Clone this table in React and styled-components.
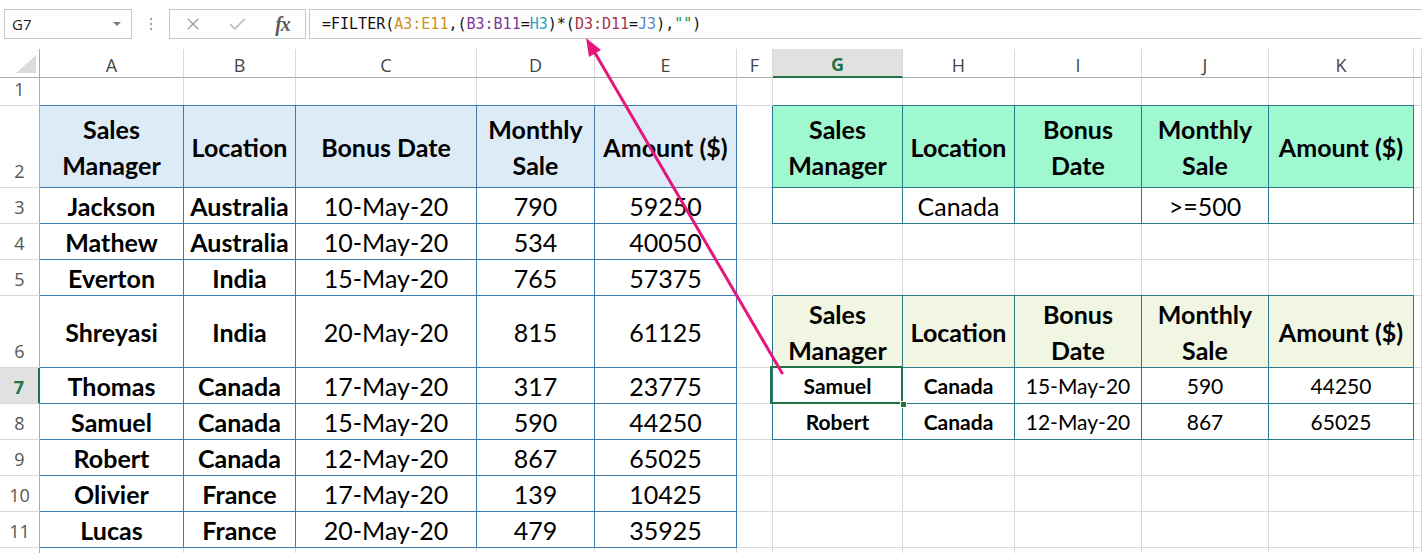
import React from 'react';
import styled, { createGlobalStyle } from 'styled-components';
import { X, Check } from 'lucide-react';

const COLS = ['A', 'B', 'C', 'D', 'E', 'F', 'G', 'H', 'I', 'J', 'K', 'L'];
const ROW_COUNT = 12;
const LAST_LABELLED_ROW = 11;
const ACTIVE_COL = 7; // G
const ACTIVE_ROW = 7;

const GRID = '#d9d9d9';

const headLabels = ['Sales\nManager', 'Location', 'Bonus Date', 'Monthly\nSale', 'Amount ($)'];
const criteriaLabels = ['Sales\nManager', 'Location', 'Bonus\nDate', 'Monthly\nSale', 'Amount ($)'];

const source = [
  ['Jackson', 'Australia', '10-May-20', '790', '59250'],
  ['Mathew', 'Australia', '10-May-20', '534', '40050'],
  ['Everton', 'India', '15-May-20', '765', '57375'],
  ['Shreyasi', 'India', '20-May-20', '815', '61125'],
  ['Thomas', 'Canada', '17-May-20', '317', '23775'],
  ['Samuel', 'Canada', '15-May-20', '590', '44250'],
  ['Robert', 'Canada', '12-May-20', '867', '65025'],
  ['Olivier', 'France', '17-May-20', '139', '10425'],
  ['Lucas', 'France', '20-May-20', '479', '35925'],
];

const results = [
  ['Samuel', 'Canada', '15-May-20', '590', '44250'],
  ['Robert', 'Canada', '12-May-20', '867', '65025'],
];

const tables = [
  { col: 1, row: 2, line: '#3d7ab0', headBg: '#ddebf7', labels: headLabels, body: source, size: 25, boldCols: 2, edgeLeft: false },
  { col: 7, row: 2, line: '#2d7a8f', headBg: '#a0f8d0', labels: criteriaLabels, body: [['', 'Canada', '', '>=500', '']], size: 25, boldCols: 0, edgeLeft: true },
  { col: 7, row: 6, line: '#2d7a8f', headBg: '#f1f6e2', labels: criteriaLabels, body: results, size: 21, boldCols: 2, edgeLeft: true },
];

const findCell = (r, c) => {
  for (const t of tables) {
    const lastRow = t.row + t.body.length;
    if (c < t.col || c > t.col + 4 || r < t.row || r > lastRow) continue;
    const i = c - t.col;
    const shadows = [];
    if (r === t.row) shadows.push(`0 -1px 0 ${t.line}`);
    if (i === 0 && t.edgeLeft) shadows.push(`-1px 0 0 ${t.line}`);
    const shadow = shadows.length ? shadows.join(', ') : 'none';
    if (r === t.row) {
      return { text: t.labels[i], bg: t.headBg, line: t.line, bold: true, size: 25, shadow };
    }
    return { text: t.body[r - t.row - 1][i], line: t.line, bold: i < t.boldCols, size: t.size, shadow };
  }
  return { text: '' };
};

const GlobalStyle = createGlobalStyle`
  html, body { margin: 0; padding: 0; background: #fff; }
  body { width: 1422px; height: 553px; overflow: hidden; }
`;

const Page = styled.div`
  position: relative;
  width: 1422px;
  height: 553px;
  overflow: hidden;
  font-family: Lato, "Open Sans", sans-serif;
`;

const FormulaBar = styled.div`
  display: flex;
  align-items: flex-start;
  height: 49px;
  box-sizing: border-box;
  padding: 9px 0 0 4px;
`;

const NameBox = styled.div`
  width: 128px;
  height: 30px;
  box-sizing: border-box;
  border: 1px solid #c6c6c6;
  display: flex;
  align-items: center;
  justify-content: space-between;
  padding: 0 10px 0 7px;
  font-family: "Open Sans", sans-serif;
  font-size: 15px;
  color: #222;
`;

const Caret = styled.span`
  width: 0;
  height: 0;
  border-left: 4px solid transparent;
  border-right: 4px solid transparent;
  border-top: 4px solid #7a7a7a;
`;

const Grip = styled.div`
  width: 37px;
  height: 30px;
  display: flex;
  flex-direction: column;
  align-items: center;
  justify-content: center;
  gap: 3px;

  span {
    width: 2px;
    height: 2px;
    background: #a3a3a3;
  }
`;

const FxBox = styled.div`
  width: 137px;
  height: 30px;
  box-sizing: border-box;
  border: 1px solid #c6c6c6;
  display: grid;
  grid-template-columns: repeat(3, 1fr);
  align-items: center;
  justify-items: center;
`;

const Fx = styled.span`
  font-family: "Liberation Serif", serif;
  font-style: italic;
  font-weight: 700;
  font-size: 20px;
  color: #5a5a5a;
  letter-spacing: -1px;
`;

const FormulaInput = styled.div`
  flex: 1;
  height: 30px;
  margin-left: 3px;
  box-sizing: border-box;
  border: 1px solid #c6c6c6;
  border-right: none;
  display: flex;
  align-items: center;
  padding-left: 12px;
  font-family: "DejaVu Sans Mono", "Liberation Mono", monospace;
  font-size: 15px;
  color: #111;
  white-space: pre;
`;

const Ref = styled.span`
  color: ${p => p.$c};
`;

const Sheet = styled.div`
  display: grid;
  grid-template-columns: 40px 144px 112px 181px 118px 142px 36px 130px 112px 127px 127px 145px 1fr;
  grid-template-rows: 29px 28px 82px 36px 36px 36px 72px 36px 36px 36px 36px 36px 36px;
`;

const Corner = styled.div`
  box-sizing: border-box;
  border-right: 1px solid #ababab;
  border-bottom: 1px solid #ababab;
  display: flex;
  align-items: flex-end;
  justify-content: flex-end;
  padding: 0 3px 4px 0;

  &::after {
    content: '';
    width: 0;
    height: 0;
    border-left: 20px solid transparent;
    border-bottom: 18px solid #dcdcdc;
  }
`;

const ColHead = styled.div`
  box-sizing: border-box;
  border-right: 1px solid ${GRID};
  border-bottom: ${p => (p.$active ? '2px solid #217346' : '1px solid #ababab')};
  background: ${p => (p.$active ? '#e1e1e1' : '#fff')};
  color: ${p => (p.$active ? '#217346' : '#444')};
  font-weight: ${p => (p.$active ? 700 : 400)};
  display: flex;
  align-items: center;
  justify-content: center;
  padding-top: 3px;
  font-family: "Open Sans", sans-serif;
  font-size: 18px;
`;

const RowHead = styled.div`
  box-sizing: border-box;
  border-right: ${p => (p.$active ? '2px solid #217346' : '1px solid #ababab')};
  border-bottom: 1px solid ${GRID};
  background: ${p => (p.$active ? '#e1e1e1' : '#fff')};
  color: ${p => (p.$active ? '#217346' : '#555')};
  font-weight: ${p => (p.$active ? 700 : 400)};
  display: flex;
  align-items: flex-end;
  justify-content: center;
  padding-bottom: 4px;
  font-family: "Open Sans", sans-serif;
  font-size: 18px;
  line-height: 24px;
`;

const Cell = styled.div`
  position: relative;
  box-sizing: border-box;
  border-right: 1px solid ${p => p.$line || GRID};
  border-bottom: 1px solid ${p => p.$line || GRID};
  background: ${p => p.$bg || '#fff'};
  box-shadow: ${p => p.$shadow || 'none'};
  display: flex;
  align-items: center;
  justify-content: center;
  text-align: center;
  white-space: pre;
  line-height: 36px;
  font-size: ${p => p.$size || 25}px;
  font-weight: ${p => (p.$bold ? 700 : 400)};
  color: #000;
`;

const SelectedCell = styled(Cell)`
  z-index: 2;

  &::before {
    content: '';
    position: absolute;
    left: -3px;
    top: -2px;
    right: -1px;
    bottom: -1px;
    border: 2px solid #217346;
  }

  &::after {
    content: '';
    position: absolute;
    right: -5px;
    bottom: -5px;
    width: 5px;
    height: 5px;
    background: #217346;
    border: 1px solid #fff;
  }
`;

const Arrow = styled.svg`
  position: absolute;
  left: 0;
  top: 0;
  pointer-events: none;
  z-index: 5;
`;

const App = () => {
  const rows = Array.from({ length: ROW_COUNT }, (_, i) => i + 1);

  return (
    <Page>
      <GlobalStyle />
      <FormulaBar>
        <NameBox>
          G7
          <Caret />
        </NameBox>
        <Grip>
          <span />
          <span />
          <span />
        </Grip>
        <FxBox>
          <X size={20} strokeWidth={1.4} color="#9c9c9c" />
          <Check size={21} strokeWidth={2.2} color="#c4c4c4" />
          <Fx>fx</Fx>
        </FxBox>
        <FormulaInput>
          =FILTER(<Ref $c="#d0901c">A3:E11</Ref>,(<Ref $c="#80379a">B3:B11</Ref>=<Ref $c="#2aa0b6">H3</Ref>)*(<Ref $c="#a3334f">D3:D11</Ref>=<Ref $c="#5a86c8">J3</Ref>),<Ref $c="#2b8a43">""</Ref>)
        </FormulaInput>
      </FormulaBar>

      <Sheet>
        <Corner />
        {COLS.map((c, i) => (
          <ColHead key={c} $active={i + 1 === ACTIVE_COL}>
            {i < 11 ? c : ''}
          </ColHead>
        ))}
        {rows.map(r => (
          <React.Fragment key={r}>
            <RowHead $active={r === ACTIVE_ROW}>{r <= LAST_LABELLED_ROW ? r : ''}</RowHead>
            {COLS.map((c, i) => {
              const cell = findCell(r, i + 1);
              const Comp = r === ACTIVE_ROW && i + 1 === ACTIVE_COL ? SelectedCell : Cell;
              return (
                <Comp
                  key={c}
                  $bg={cell.bg}
                  $line={cell.line}
                  $bold={cell.bold}
                  $size={cell.size}
                  $shadow={cell.shadow}
                >
                  {cell.text}
                </Comp>
              );
            })}
          </React.Fragment>
        ))}
      </Sheet>

      <Arrow width="1422" height="553" viewBox="0 0 1422 553">
        <line x1="782" y1="373" x2="595" y2="53" stroke="#e5177b" strokeWidth="3" strokeLinecap="round" />
        <polygon points="586,38 601,50 589,57" fill="#e5177b" />
      </Arrow>
    </Page>
  );
};

export default App;
